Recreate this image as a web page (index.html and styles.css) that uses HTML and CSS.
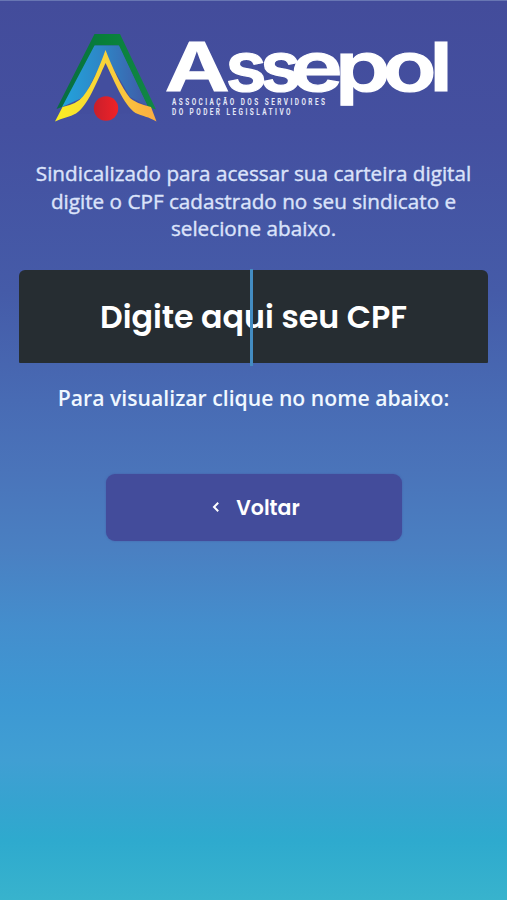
FILE: index.html
```
<!DOCTYPE html>
<html lang="pt-BR">
<head>
  <meta charset="UTF-8">
  <meta name="viewport" content="width=device-width, initial-scale=1.0">
  <title>Assepol - Carteira Digital</title>
  <link rel="stylesheet" href="styles.css">
</head>
<body>

  <main class="page">
    <svg class="logo" viewBox="54 30 400 96" role="img" aria-label="Assepol">
      <defs>
        <linearGradient id="yellow" x1="0" x2="1">
          <stop offset="0" stop-color="#f8ee22"/>
          <stop offset="0.5" stop-color="#f9d23a"/>
          <stop offset="1" stop-color="#fbac43"/>
        </linearGradient>
        <linearGradient id="blue" x1="0" x2="1">
          <stop offset="0" stop-color="#22a3dc"/>
          <stop offset="0.5" stop-color="#2f83c4"/>
          <stop offset="1" stop-color="#405aa6"/>
        </linearGradient>
        <linearGradient id="green" x1="0" x2="1">
          <stop offset="0" stop-color="#086b43"/>
          <stop offset="0.5" stop-color="#08803a"/>
          <stop offset="1" stop-color="#128647"/>
        </linearGradient>
        <linearGradient id="red" x1="0" x2="1">
          <stop offset="0" stop-color="#c91f2b"/>
          <stop offset="1" stop-color="#ef2228"/>
        </linearGradient>
      </defs>
      <path fill="url(#green)" d="M94.500 34H120L156 109.500L148 107L118.500 45.500H95L64.500 106L56.500 109Z"/>
      <path fill="url(#blue)" d="M94.500 45.500H119L147.500 106L130 97L105.500 55L84 97L62 107Z"/>
      <path class="arch" d="M105.500 63C97 82 87 107 76 113.500L135.500 113C123 104 115 82 105.500 63Z"/>
      <path fill="url(#yellow)" d="M105.500 50C112 67 122 88 130 98Q135 103 151 107L156.500 121.500C149 117 142 116 135.500 113C123 104 115 82 105.500 63C97 82 87 107 76 113.500C70 117 62 118 55 121.500L62.500 107Q77 104 83 96.500C92 85 99 68 105.500 50Z"/>
      <circle cx="106" cy="108.500" r="12.200" fill="url(#red)"/>
      <text class="logo-name" transform="translate(165 91) scale(1.3 1)">A</text>
      <text class="logo-name" transform="translate(225.500 91) scale(1.1 1)" x="0 31.500">ss</text>
      <text class="logo-name" transform="translate(290.500 91) scale(1.3 1)" x="0 34.500 71 107">epol</text>
      <text class="logo-sub" transform="translate(172 105.300) scale(0.750 1)" textLength="204">ASSOCIAÇÃO DOS SERVIDORES</text>
      <text class="logo-sub" transform="translate(172 115) scale(0.750 1)" textLength="158">DO PODER LEGISLATIVO</text>
    </svg>

    <p class="intro">Sindicalizado para acessar sua carteira digital<br>digite o CPF cadastrado no seu sindicato e<br>selecione abaixo.</p>

    <div class="cpf-field">
      <span class="cpf-text">Digite aqui seu CPF</span>
      <span class="caret"></span>
    </div>

    <p class="hint">Para visualizar clique no nome abaixo:</p>

    <button class="back-btn" type="button">
      <svg class="chevron" viewBox="0 0 8 12"><path d="M6.200 1.800L2 6L6.200 10.200"/></svg>
      <span>Voltar</span>
    </button>
  </main>

</body>
</html>
```
FILE: styles.css
```
body {
  margin: 0;
  font-family: "Open Sans", "Noto Sans", sans-serif;
}
.page {
  box-sizing: border-box;
  height: 900px;
  padding: 29px 19px 0;
  border-top: 1px solid #6876b3;
  display: flex;
  flex-direction: column;
  align-items: center;
  background: linear-gradient(#434c9b 0, #4450a0 130px, #455ba8 290px, #486bb4 400px, #4a74ba 470px, #4a80c2 550px, #448ecd 625px, #3d98d3 700px, #409fd3 760px, #36a3d0 800px, #2eaace 840px, #38b3cd 100%);
}
.logo {
  width: 400px;
  height: 96px;
  overflow: visible;
}
.arch {
  fill: #434e9e;
}
.logo-name {
  font-family: Inter, sans-serif;
  font-size: 68px;
  font-weight: 600;
  fill: #fff;
  stroke: #fff;
  stroke-width: 1.2;
}
.logo-sub {
  font-family: Roboto, sans-serif;
  font-size: 8.600px;
  font-weight: 700;
  fill: #e4e8f8;
}
.intro {
  margin: 34px 0 0;
  text-align: center;
  font-size: 20.700px;
  line-height: 27.500px;
  color: #dbe3fa;
  -webkit-text-stroke: 0.4px #dbe3fa;
  white-space: nowrap;
}
.cpf-field {
  position: relative;
  align-self: stretch;
  height: 93px;
  margin-top: 27px;
  display: flex;
  align-items: center;
  justify-content: center;
  background-color: #262d32;
  border-radius: 6px 6px 1px 1px;
}
.cpf-text {
  padding-top: 2px;
  font-family: Poppins, Inter, sans-serif;
  font-size: 31.700px;
  font-weight: 600;
  color: #fff;
  white-space: nowrap;
}
.caret {
  position: absolute;
  left: 231px;
  top: -1px;
  width: 3px;
  height: 97px;
  background-color: #438cc2;
}
.hint {
  margin: 20px 0 0;
  font-size: 21.200px;
  font-weight: 600;
  line-height: 30px;
  color: #f0f8ff;
  white-space: nowrap;
}
.back-btn {
  width: 296px;
  height: 67px;
  margin-top: 61px;
  padding: 0 0 0 5px;
  border: none;
  border-radius: 9px;
  display: flex;
  align-items: center;
  justify-content: center;
  gap: 16px;
  background-color: #434c9b;
  box-shadow: 0 0 2px rgba(67, 76, 155, 0.6);
  font-family: Poppins, Inter, sans-serif;
  font-size: 20.500px;
  font-weight: 600;
  color: #fff;
  cursor: pointer;
}
.chevron {
  width: 8px;
  height: 12px;
  fill: none;
  stroke: #fff;
  stroke-width: 2;
}
```
